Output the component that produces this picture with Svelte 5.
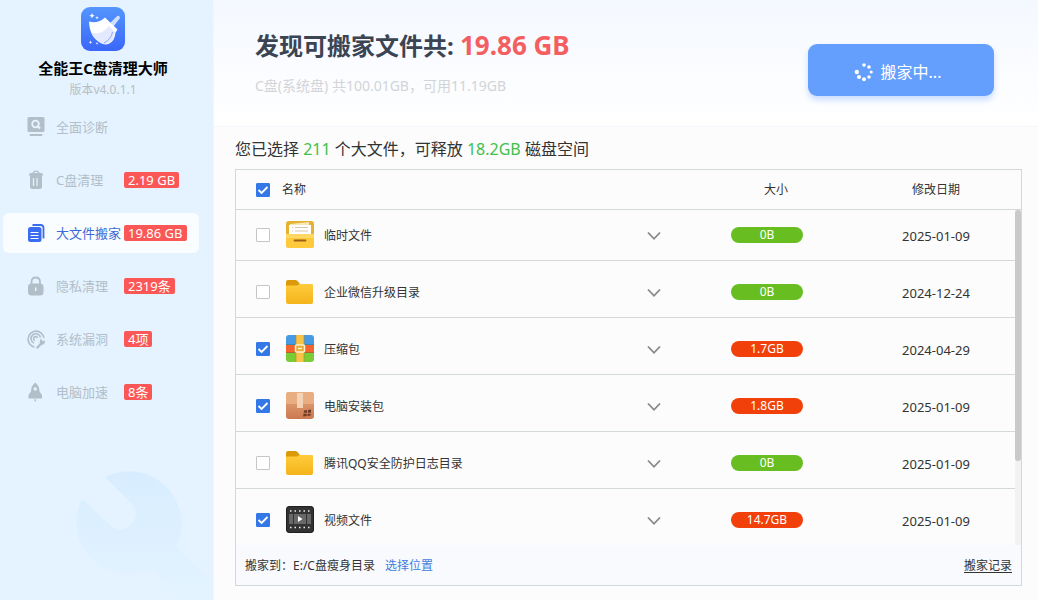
<script>
  const nav = [
    { icon: 'scan', label: '全面诊断' },
    { icon: 'trash', label: 'C盘清理', badge: '2.19 GB' },
    { icon: 'files', label: '大文件搬家', badge: '19.86 GB', active: true },
    { icon: 'lock', label: '隐私清理', badge: '2319条' },
    { icon: 'radar', label: '系统漏洞', badge: '4项' },
    { icon: 'rocket', label: '电脑加速', badge: '8条' }
  ];

  let rows = $state([
    { icon: 'drawer', name: '临时文件', size: '0B', date: '2025-01-09', checked: false },
    { icon: 'folder', name: '企业微信升级目录', size: '0B', date: '2024-12-24', checked: false },
    { icon: 'archive', name: '压缩包', size: '1.7GB', date: '2024-04-29', checked: true },
    { icon: 'box', name: '电脑安装包', size: '1.8GB', date: '2025-01-09', checked: true },
    { icon: 'folder', name: '腾讯QQ安全防护日志目录', size: '0B', date: '2025-01-09', checked: false },
    { icon: 'video', name: '视频文件', size: '14.7GB', date: '2025-01-09', checked: true }
  ]);
  let all = $state(true);

  const dots = [
    [10, 3, 1.8], [15, 5, 1.8], [17.2, 10, 1.6], [15, 15, 1.8],
    [10, 17.2, 2], [5, 15, 2.1], [2.8, 10, 2.2]
  ];
</script>

<div class="app">
  <aside>
    <svg class="wrench" viewBox="0 0 138 130" aria-hidden="true">
      <defs>
        <linearGradient id="wr" x1="0" y1="0" x2="0" y2="1">
          <stop offset="0" stop-color="#d7edff" />
          <stop offset="1" stop-color="#e4f3ff" />
        </linearGradient>
      </defs>
      <path fill="url(#wr)" d="M30 7A52.500 52.500 0 0 1 101 77L138 112V130H108L76 100A52.500 52.500 0 0 1 7 29L36 56Q46 64 55 55Q66 45 57 34Z" />
    </svg>
    <div class="brand">
      <svg class="logo" viewBox="0 0 44 44" aria-hidden="true">
        <defs>
          <linearGradient id="lg" x1="0" y1="0" x2="0" y2="1">
            <stop offset="0" stop-color="#5595fd" />
            <stop offset="1" stop-color="#3a67fa" />
          </linearGradient>
        </defs>
        <rect width="44" height="44" rx="9" fill="url(#lg)" />
        <path d="M29 16L36.500 8.800Q38.800 8.200 39 11L32.500 19.500Z" fill="#cfe0ff" />
        <path d="M8 14.500Q17 17 24 10.500L36.500 22.500L34.500 25.500Q34 34 27.500 37Q24 38 21 36.500Q8.500 31 8 14.500Z" fill="#fff" />
        <path d="M10.500 26Q21 28 28 19L34 25Q33 34 27.500 36.500Q24 37.500 21 36.500Q13.500 33 10.500 26Z" fill="#e3eaff" />
        <path d="M23 36Q30.500 32 31.500 25" stroke="#8aa8fc" fill="none" />
        <path d="M11 6l.8 2 2 .8-2 .8-.8 2-.8-2-2-.8 2-.8zM16 9l.5 1.300 1.300.5-1.300.5-.5 1.300-.5-1.300-1.300-.5 1.300-.5zM9.500 33.500l.5 1.300 1.300.5-1.300.5-.5 1.300-.5-1.300-1.300-.5 1.300-.5zM16 35l.4 1 1 .4-1 .4-.4 1-.4-1-1-.4 1-.4z" fill="#fff" />
      </svg>
      <h1>全能王C盘清理大师</h1>
      <p>版本v4.0.1.1</p>
    </div>
    <nav>
      {#each nav as n}
        <button class="item" class:active={n.active}>
          <svg class="ni" viewBox="0 0 20 20" fill="currentColor" aria-hidden="true">
            {#if n.icon === 'scan'}
              <rect x="1.500" y="0" width="17" height="15" rx="1.500" />
              <rect x="3.500" y="17" width="13" height="2" rx="1" />
              <circle cx="9.500" cy="7" r="3.300" fill="none" stroke="#e8f4ff" stroke-width="1.800" />
              <path d="M11.800 9.300L14 11.500" stroke="#e8f4ff" stroke-width="2" />
            {:else if n.icon === 'trash'}
              <path d="M3 4.500Q3 3 5 3H6.500Q7 .5 10 .5T13.500 3H15Q17 3 17 4.500V5.500H3ZM8 3H12Q11.500 1.800 10 1.800T8 3Z" fill-rule="evenodd" />
              <path d="M4 5H16V16.500Q16 19 13.500 19H6.500Q4 19 4 16.500Z" />
              <path d="M7.500 8V16M11 8V16" stroke="#e4f3ff" stroke-width="1.200" />
            {:else if n.icon === 'files'}
              <path d="M6.500 2H14.500Q17.500 2 17.500 5V15.500" fill="none" stroke="currentColor" stroke-width="1.800" />
              <rect x="2" y="4" width="13.500" height="15" rx="2.500" />
              <path d="M4.500 9.500H12.500M4.500 12.500H12.500M4.500 15.500H12.500" stroke="#fff" stroke-width="1.200" />
            {:else if n.icon === 'lock'}
              <path d="M5.500 9V6Q5.500 1.500 9.700 1.500T14 6V9" fill="none" stroke="currentColor" stroke-width="1.800" />
              <rect x="2" y="7.500" width="15.500" height="12" rx="3.500" />
              <path d="M9.700 12V14.500" stroke="#e4f3ff" stroke-width="1.600" stroke-linecap="round" />
            {:else if n.icon === 'radar'}
              <path d="M8.500 18A8 8 0 1 1 18 9M8 14A4.800 4.800 0 1 1 14.500 8.500M9 11.500A2 2 0 1 1 11.500 9" fill="none" stroke="currentColor" stroke-width="1.600" />
              <path d="M10 18.500L14 14Q13 11.500 15.500 9.500L16 12L18.800 11.500Q19.500 15.500 15.800 15.800L12 19.500Q10 20 10 18.500Z" />
            {:else}
              <path fill-rule="evenodd" d="M9.200 .5Q13.500 4 13.500 9.500L16 13V16.500H2.500V13L5 9.500Q5 4 9.200 .5ZM9.200 5.300A1.700 1.700 0 1 0 9.300 5.300Z" />
              <path d="M8 17.500H10.500L9.200 20Z" />
            {/if}
          </svg>
          <span class="nl">{n.label}</span>
          {#if n.badge}<span class="badge">{n.badge}</span>{/if}
        </button>
      {/each}
    </nav>
  </aside>

  <main>
    <header>
      <div>
        <h2>发现可搬家文件共: <em>19.86 GB</em></h2>
        <p>C盘(系统盘) 共100.01GB，可用11.19GB</p>
      </div>
      <button class="move">
        <svg viewBox="0 0 20 20" fill="#fff" aria-hidden="true">
          {#each dots as [cx, cy, r]}<circle {cx} {cy} {r} />{/each}
        </svg>
        搬家中...
      </button>
    </header>

    <section>
      <p class="summary">您已选择 <b>211</b> 个大文件，可释放 <b>18.2GB</b> 磁盘空间</p>
      <div class="panel">
        <div class="list">
          <table>
            <colgroup><col class="c1" /><col /><col class="c3" /><col class="c4" /><col class="c5" /></colgroup>
            <thead>
              <tr>
                <th><input id="all" type="checkbox" bind:checked={all} /></th>
                <th class="left"><label for="all">名称</label></th>
                <th></th>
                <th>大小</th>
                <th>修改日期</th>
              </tr>
            </thead>
            <tbody>
              {#each rows as r, i}
                <tr>
                  <td><input id="row{i}" type="checkbox" bind:checked={r.checked} /></td>
                  <td>
                    <label class="file" for="row{i}">
                      <svg class="fi" viewBox="0 0 28 28" aria-hidden="true">
                        {#if r.icon === 'drawer'}
                          <rect width="28" height="27" rx="3" fill="#e5b130" />
                          <path d="M4 3L23 1V12H4Z" fill="#f8e7b7" />
                          <path d="M3 4H25V16H3Z" fill="#fff" />
                          <path d="M6 6.500H7M9 6.500H22M6 10H7M9 10H22" stroke="#d8c5ac" />
                          <path d="M0 13H28V24Q28 27 25 27H3Q0 27 0 24Z" fill="#ffc93c" />
                          <path d="M0 13H28V17H0Z" fill="#ffd863" />
                          <path d="M8.500 19.500H19.500" stroke="#9b6018" stroke-width="1.800" stroke-linecap="round" />
                        {:else if r.icon === 'folder'}
                          <path d="M0 9V4Q0 2 2 2H9.500Q11 2 12 3.500L14 6H25V10H0Z" fill="#dc9a0b" />
                          <path d="M0 8.500Q0 7.500 1 7.500H11L13.500 6H26Q27 6 27 7V24Q27 26 25 26H2Q0 26 0 24Z" fill="url(#fold{i})" />
                          <defs>
                            <linearGradient id="fold{i}" x1="0" y1="0" x2="0" y2="1">
                              <stop offset="0" stop-color="#ffcb3c" /><stop offset="1" stop-color="#f4b41b" />
                            </linearGradient>
                          </defs>
                        {:else if r.icon === 'archive'}
                          <path d="M0 10V3Q0 0 3 0H25Q28 0 28 3V10Z" fill="#469be2" />
                          <path d="M0 10H28V18H0Z" fill="#f3652d" />
                          <path d="M0 18H28V24Q28 27 25 27H3Q0 27 0 24Z" fill="#79cc35" />
                          <path d="M0 9.500H28M0 17.500H28" stroke="#275d42" stroke-opacity=".3" />
                          <rect x="10" width="8" height="27" fill="#f7c447" />
                          <path d="M10 0V27M18 0V27" stroke="#b88724" stroke-opacity=".6" />
                          <rect x="9.500" y="10" width="9" height="7" rx="1" fill="#e5a936" stroke="#fff0c9" stroke-width="1.500" />
                          <path d="M12 13.500H16" stroke="#fff0c9" stroke-width="1.500" />
                        {:else if r.icon === 'box'}
                          <rect width="28" height="27" rx="3" fill="url(#boxg)" />
                          <path d="M0 12V3Q0 0 3 0H25Q28 0 28 3V12Z" fill="#e8ad80" />
                          <path d="M11 1H17V16H11Z" fill="#f3d2b6" />
                          <path d="M18 18.500L21 18V20.800H17.700ZM22 18L25 17.500V20.800H21.800ZM17.500 21.800H20.700V24L17.200 24.500ZM21.600 21.800H24.700V23.500L21.400 24Z" fill="#713a23" />
                          <defs>
                            <linearGradient id="boxg" x1="0" y1="0" x2="0" y2="1">
                              <stop offset=".4" stop-color="#dc976b" /><stop offset="1" stop-color="#cb7850" />
                            </linearGradient>
                          </defs>
                        {:else}
                          <rect x=".5" y=".5" width="27" height="26" rx="2.500" fill="#333" stroke="#1f1f1f" />
                          <path d="M3 8H7V18H3ZM8 8H20V18H8ZM21 8H25V18H21Z" fill="#686868" />
                          <path d="M4 5H25M4 21.500H25" stroke="#eee" stroke-width="1.500" stroke-dasharray="1.500 3" />
                          <path d="M12 10V16L16.500 13Z" fill="#fff" />
                        {/if}
                      </svg>
                      <span class="text">{r.name}</span>
                    </label>
                  </td>
                  <td>
                    <button class="expand" aria-label="展开">
                      <svg viewBox="0 0 14 10" aria-hidden="true"><path d="M1 1.500L7 7.800L13 1.500" fill="none" stroke="#888" stroke-width="1.800" /></svg>
                    </button>
                  </td>
                  <td class="size"><span class="pill" class:hot={r.size !== '0B'}>{r.size}</span></td>
                  <td class="date"><span class="text">{r.date}</span></td>
                </tr>
              {/each}
            </tbody>
          </table>
          <div class="track"><div class="thumb"></div></div>
        </div>
        <footer>
          <span>搬家到：E:/C盘瘦身目录</span>
          <a class="pick" href="#pick">选择位置</a>
          <a class="log" href="#log">搬家记录</a>
        </footer>
      </div>
    </section>
  </main>
</div>

<style>
  :global(body) { margin: 0; }
  .app {
    display: flex;
    height: 100vh;
    background: #fcfcfc;
    color: #333;
    font: 12px/16px "Noto Sans", "Noto Sans CJK SC", sans-serif;
  }
  button { font: inherit; border: 0; padding: 0; background: none; cursor: pointer; }
  h1, h2, p { margin: 0; }

  aside {
    position: relative;
    flex: 0 0 213px;
    background: #e4f3ff;
    border-right: 1px solid #f3f6f9;
    overflow: hidden;
  }
  .wrench { position: absolute; right: 0; bottom: 0; width: 138px; height: 130px; }
  .brand {
    display: flex;
    flex-direction: column;
    align-items: center;
    padding: 7px 7px 0 0;
  }
  .logo { width: 44px; height: 44px; }
  h1 { margin-top: 7px; font-size: 15px; line-height: 20px; color: #000; }
  .brand p { margin-top: 4px; font-size: 12px; line-height: 16px; color: #b9bdc1; }
  nav {
    position: relative;
    display: flex;
    flex-direction: column;
    gap: 13px;
    padding: 9px 14px 0 3px;
  }
  .item {
    display: flex;
    align-items: center;
    height: 40px;
    padding-left: 23px;
    border-radius: 6px;
    font-size: 13px;
    color: #b2bec8;
    text-align: left;
    white-space: nowrap;
  }
  .item.active { background: #fafdff; color: #3a6cf0; }
  .ni { width: 20px; height: 20px; margin-right: 10px; }
  .nl { min-width: 68px; }
  .active .nl { color: #3d6ad6; }
  .badge {
    padding: 0 4px;
    border-radius: 2px;
    background: #fb5757;
    color: #fff;
    line-height: 16px;
  }

  main { flex: 1; min-width: 0; display: flex; flex-direction: column; }
  header {
    display: flex;
    justify-content: space-between;
    align-items: flex-start;
    box-sizing: border-box;
    height: 127px;
    padding: 30px 44px 0 41px;
    background: linear-gradient(#f4f8ff, #fff);
    border-bottom: 1px solid #f4f8fc;
  }
  h2 { font-size: 24px; line-height: 32px; color: #3b4453; }
  em { font-style: normal; font-size: 26px; line-height: 24px; color: #f45e60; }
  header p { margin-top: 14px; font-size: 14px; line-height: 20px; color: #d2d4d7; }
  .move {
    display: flex;
    align-items: center;
    justify-content: center;
    gap: 7px;
    box-sizing: border-box;
    width: 186px;
    height: 52px;
    margin-top: 14px;
    padding: 3px 7px 0 0;
    border-radius: 9px;
    background: #659ffd;
    box-shadow: 0 4px 6px #c9dcff;
    color: #fff;
    font-size: 16px;
  }
  .move svg { width: 20px; height: 20px; }

  section {
    flex: 1;
    min-height: 0;
    display: flex;
    flex-direction: column;
    padding: 10px 16px 14px 21px;
  }
  .summary { font-size: 16px; line-height: 24px; }
  .summary b { font-weight: 400; color: #3fc04b; }
  .panel {
    flex: 1;
    min-height: 0;
    display: flex;
    flex-direction: column;
    margin-top: 8px;
    border: 1px solid #d3d9db;
  }
  .list { position: relative; flex: 1; min-height: 0; overflow: hidden; }
  table { width: 100%; table-layout: fixed; border-collapse: separate; border-spacing: 0; }
  .c1 { width: 46px; }
  .c3 { width: 82px; }
  .c4 { width: 162px; }
  .c5 { width: 164px; }
  th, td { padding: 0; text-align: center; border-bottom: 1px solid #d3d9db; }
  th { height: 39px; font-weight: 400; }
  td { height: 50px; padding-top: 6px; }
  tr:first-child td { padding-top: 0; }
  tr:last-child td { border-bottom-color: transparent; }
  th:first-child, td:first-child { text-align: left; padding-left: 20px; }
  th.left { text-align: left; }
  th:last-child, td:last-child { padding-right: 6px; }
  input {
    appearance: none;
    display: block;
    box-sizing: border-box;
    width: 14px;
    height: 14px;
    margin: 0;
    border: 1px solid #c6c6c6;
    border-radius: 1px;
    background: #fff;
  }
  input:checked {
    border-color: #3478e8;
    background: #3478e8 url("data:image/svg+xml,%3Csvg xmlns='http://www.w3.org/2000/svg' viewBox='0 0 12 12'%3E%3Cpath d='M1.500 6L4.600 9L10.500 3' fill='none' stroke='white' stroke-width='1.800'/%3E%3C/svg%3E");
  }
  .file { display: flex; align-items: center; gap: 10px; padding-left: 4px; }
  .text { display: block; padding-top: 2px; }
  .date { font-size: 13px; }
  .fi { width: 28px; height: 28px; }
  .expand { display: block; margin: 0 auto; padding-top: 2px; }
  .expand svg { display: block; width: 14px; height: 10px; }
  td.size { padding-right: 18px; }
  .pill {
    display: block;
    width: 72px;
    margin: 0 auto;
    border-radius: 8px;
    background: #68bd20;
    color: #fff;
  }
  .pill.hot { background: #f2400a; }
  .track {
    position: absolute;
    top: 40px;
    right: 0;
    bottom: 0;
    width: 6px;
    background: #f2f2f2;
  }
  .thumb { height: 75%; border-radius: 3px; background: #c9c9c9; }
  footer {
    display: flex;
    align-items: center;
    box-sizing: border-box;
    height: 40px;
    padding: 2px 9px 0;
    background: #f9fafe;
  }
  .pick { margin-left: 10px; color: #3e7de0; text-decoration: none; }
  .log { margin-left: auto; color: #333; text-underline-offset: 2px; }
</style>
